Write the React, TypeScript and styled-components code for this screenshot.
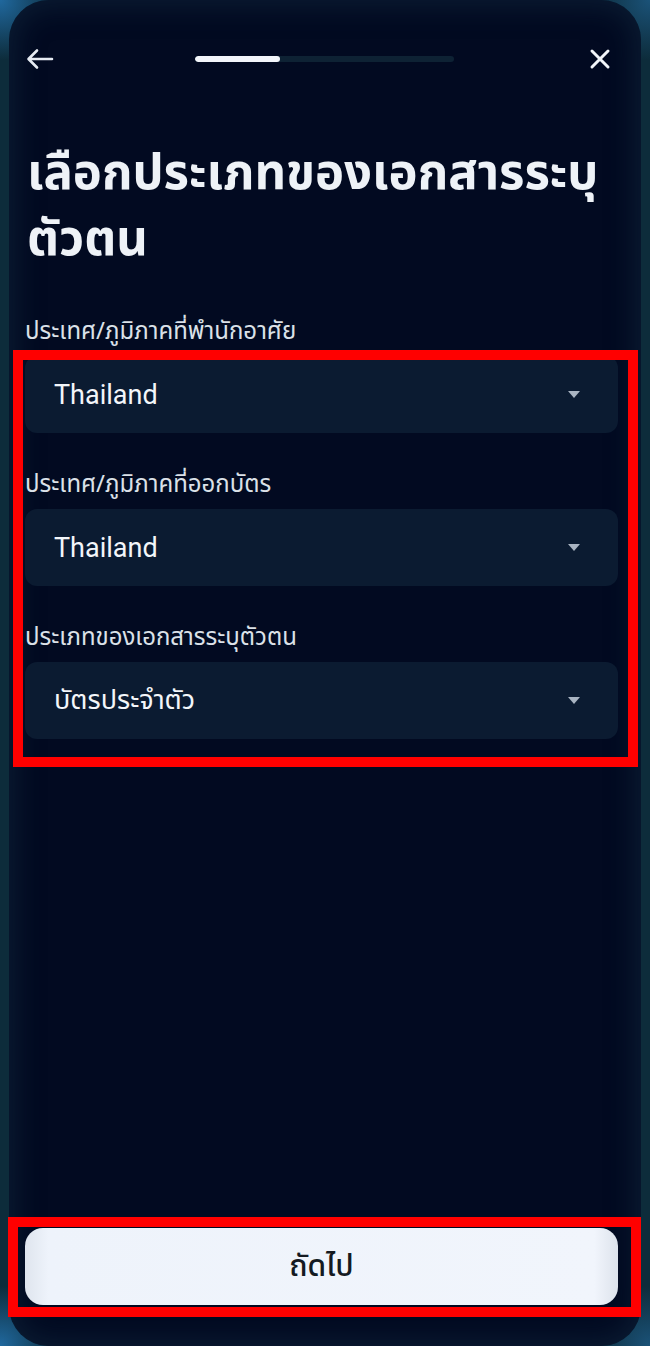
import styled, { createGlobalStyle } from "styled-components";

const GlobalStyle = createGlobalStyle`
  html, body {
    margin: 0;
    padding: 0;
    background: #0c2a3a;
  }
  * {
    box-sizing: border-box;
  }
`;

const THAI = `"Noto Sans Thai", "Noto Sans", "Liberation Sans", sans-serif`;
const UI = `Roboto, "Noto Sans Thai", "Liberation Sans", sans-serif`;

const fields = [
  { label: "ประเทศ/ภูมิภาคที่ออกบัตร", value: "Thailand" },
  { label: "ประเภทของเอกสารระบุตัวตน", value: "บัตรประจำตัว" },
];

export default function App() {
  return (
    <Frame>
      <GlobalStyle />
      <Screen>
        <Header />

        <Title>
          เลือกประเภทของเอกสารระบุ
          <br />
          ตัวตน
        </Title>

        <Form>
          <Label>ประเทศ/ภูมิภาคที่พำนักอาศัย</Label>
          <Marked $top={-6} $right={-20} $bottom={-28} $left={-12}>
            <Select value="Thailand" />
            {fields.map((f) => (
              <Field key={f.label}>
                <Label>{f.label}</Label>
                <Select value={f.value} />
              </Field>
            ))}
          </Marked>
        </Form>

        <Footer>
          <Marked $top={-11} $right={-23} $bottom={-12} $left={-17}>
            <NextButton>ถัดไป</NextButton>
          </Marked>
        </Footer>
      </Screen>
    </Frame>
  );
}

function Header() {
  return (
    <TopBar>
      <IconButton aria-label="back">
        <svg width="30" height="24" viewBox="0 0 30 24" fill="none">
          <path
            d="M27 12H4M12 3.5L3.5 12L12 20.5"
            stroke="#e6ebf2"
            strokeWidth="2.6"
            strokeLinecap="round"
            strokeLinejoin="round"
          />
        </svg>
      </IconButton>

      <Progress>
        <ProgressFill style={{ width: "33%" }} />
      </Progress>

      <IconButton aria-label="close">
        <svg width="22" height="22" viewBox="0 0 22 22" fill="none">
          <path
            d="M3 3L19 19M19 3L3 19"
            stroke="#f2f5f9"
            strokeWidth="3"
            strokeLinecap="round"
          />
        </svg>
      </IconButton>
    </TopBar>
  );
}

function Select({ value }: { value: string }) {
  return (
    <SelectBox>
      <SelectText>{value}</SelectText>
      <Caret />
    </SelectBox>
  );
}

const Frame = styled.div`
  width: 100%;
  min-height: 100vh;
  background:
    radial-gradient(circle at 0 0, rgba(40, 130, 200, 0.7), transparent 60px),
    radial-gradient(circle at 100% 0, rgba(40, 120, 180, 0.5), transparent 60px),
    radial-gradient(circle at 0 100%, rgba(40, 130, 200, 0.7), transparent 60px),
    radial-gradient(circle at 100% 100%, rgba(40, 120, 180, 0.5), transparent 60px),
    #0d2c3b;
  padding: 0 9px;
  display: flex;
`;

const Screen = styled.section`
  flex: 1;
  min-height: 100vh;
  display: flex;
  flex-direction: column;
  padding: 0 23px 0 16px;
  background: #020a21;
  border-radius: 40px;
  box-shadow: inset 0 0 28px 6px rgba(18, 44, 66, 0.55);
  color: #f1f4f8;
  font-family: ${THAI};
`;

const TopBar = styled.div`
  display: flex;
  align-items: center;
  justify-content: space-between;
  height: 40px;
  margin-top: 39px;
  padding: 0 7px 0 0;
`;

const IconButton = styled.button`
  display: flex;
  align-items: center;
  justify-content: center;
  background: none;
  border: none;
  padding: 0;
  cursor: pointer;
`;

const Progress = styled.div`
  width: 259px;
  height: 6px;
  margin-left: 4px;
  border-radius: 3px;
  background: #0e2234;
  overflow: hidden;
`;

const ProgressFill = styled.div`
  height: 100%;
  background: #f3f6fb;
  border-radius: 3px;
`;

const Title = styled.h1`
  margin: 62px 0 0;
  padding-left: 2px;
  font-size: 49px;
  line-height: 66px;
  font-weight: 700;
  color: #eef2f7;
  white-space: nowrap;
`;

const Form = styled.div`
  display: flex;
  flex-direction: column;
  margin-top: 44px;
`;

const Label = styled.div`
  font-size: 24px;
  line-height: 30px;
  color: #dbe1e8;
  margin-bottom: 9px;
`;

const Marked = styled.div<{
  $top: number;
  $right: number;
  $bottom: number;
  $left: number;
}>`
  position: relative;
  display: flex;
  flex-direction: column;

  &::after {
    content: "";
    position: absolute;
    top: ${(p) => p.$top}px;
    right: ${(p) => p.$right}px;
    bottom: ${(p) => p.$bottom}px;
    left: ${(p) => p.$left}px;
    border: 10px solid #ff0000;
    pointer-events: none;
  }
`;

const Field = styled.div`
  display: flex;
  flex-direction: column;
  margin-top: 37px;
`;

const SelectBox = styled.div`
  display: flex;
  align-items: center;
  justify-content: space-between;
  height: 77px;
  padding: 0 38px 0 29px;
  border-radius: 12px;
  background: #0b1b31;
`;

const SelectText = styled.span`
  font-family: ${UI};
  font-size: 27px;
  font-weight: 400;
  color: #f3f6fa;
`;

const Caret = styled.span`
  width: 0;
  height: 0;
  border-left: 6px solid transparent;
  border-right: 6px solid transparent;
  border-top: 7px solid #a9b4c2;
`;

const Footer = styled.div`
  margin-top: auto;
  margin-bottom: 41px;
`;

const NextButton = styled.button`
  width: 100%;
  height: 77px;
  border: none;
  border-radius: 18px;
  background: linear-gradient(90deg, #dfe5ee 0%, #eef3fb 4%, #f1f5fc 96%, #dde3ec 100%);
  color: #141a22;
  font-family: ${THAI};
  font-size: 30px;
  font-weight: 500;
  cursor: pointer;
`;
